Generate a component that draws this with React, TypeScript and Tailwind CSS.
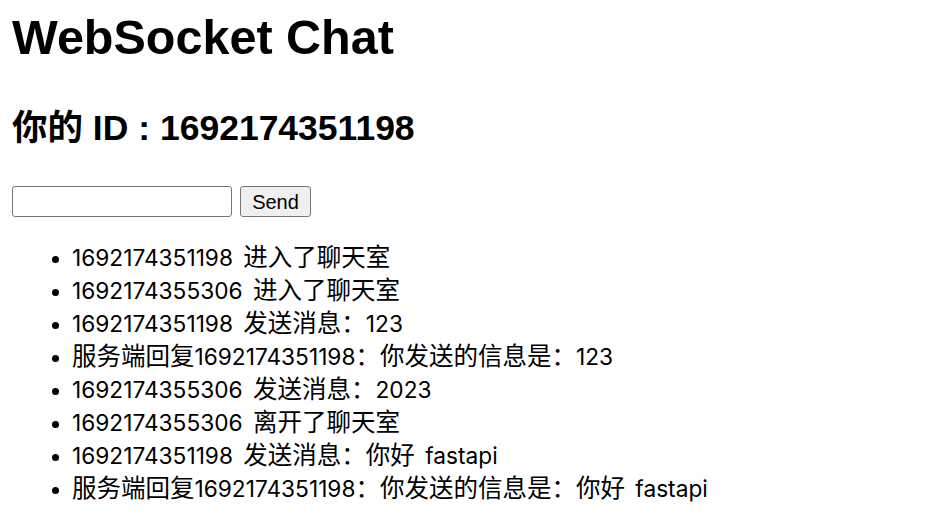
const messages = [
  "1692174351198 进入了聊天室",
  "1692174355306 进入了聊天室",
  "1692174351198 发送消息：123",
  "服务端回复1692174351198：你发送的信息是：123",
  "1692174355306 发送消息：2023",
  "1692174355306 离开了聊天室",
  "1692174351198 发送消息：你好 fastapi",
  "服务端回复1692174351198：你发送的信息是：你好 fastapi",
];

// CJK runs render a little larger than the latin runs, like the original page
function MixedText({ text }: { text: string }) {
  const parts = text.split(/([\u3000-\u9fff\uff00-\uffef]+)/).filter(Boolean);
  return (
    <>
      {parts.map((p, i) =>
        /[\u3000-\u9fff\uff00-\uffef]/.test(p) ? (
          <span key={i} className="text-[24.5px] leading-none">{p}</span>
        ) : (
          <span
            key={i}
            className="font-['Inter','Noto_Sans_CJK_SC',sans-serif] text-[22.7px] leading-none [word-spacing:4px] [font-variant-numeric:proportional-nums]"
          >
            {p}
          </span>
        )
      )}
    </>
  );
}

export default function App() {
  return (
    <div className="min-h-[522px] bg-white px-3 text-black font-['Liberation_Sans','Noto_Sans_CJK_SC',sans-serif]">
      <h1 className="pt-[9px] text-[48.5px] font-bold leading-[56px]">WebSocket Chat</h1>
      <h2 className="mt-[42px] text-[35.5px] font-bold leading-[42px]">你的 ID : 1692174351198</h2>
      <form className="mt-[37px] flex items-center gap-2" onSubmit={(e) => e.preventDefault()}>
        <input
          type="text"
          className="h-[31px] w-[220px] rounded-[3px] border border-[#767676] bg-white px-1 text-[20px]"
        />
        <button
          type="submit"
          className="h-[31px] w-[71px] rounded-[3px] border border-[#767676] bg-[#efefef] text-[20px] leading-none"
        >
          Send
        </button>
      </form>
      <ul className="mt-[25px] list-disc pl-[60px] text-[22px] leading-[33px]">
        {messages.map((m, i) => (
          <li key={i}>
            <MixedText text={m} />
          </li>
        ))}
      </ul>
    </div>
  );
}
